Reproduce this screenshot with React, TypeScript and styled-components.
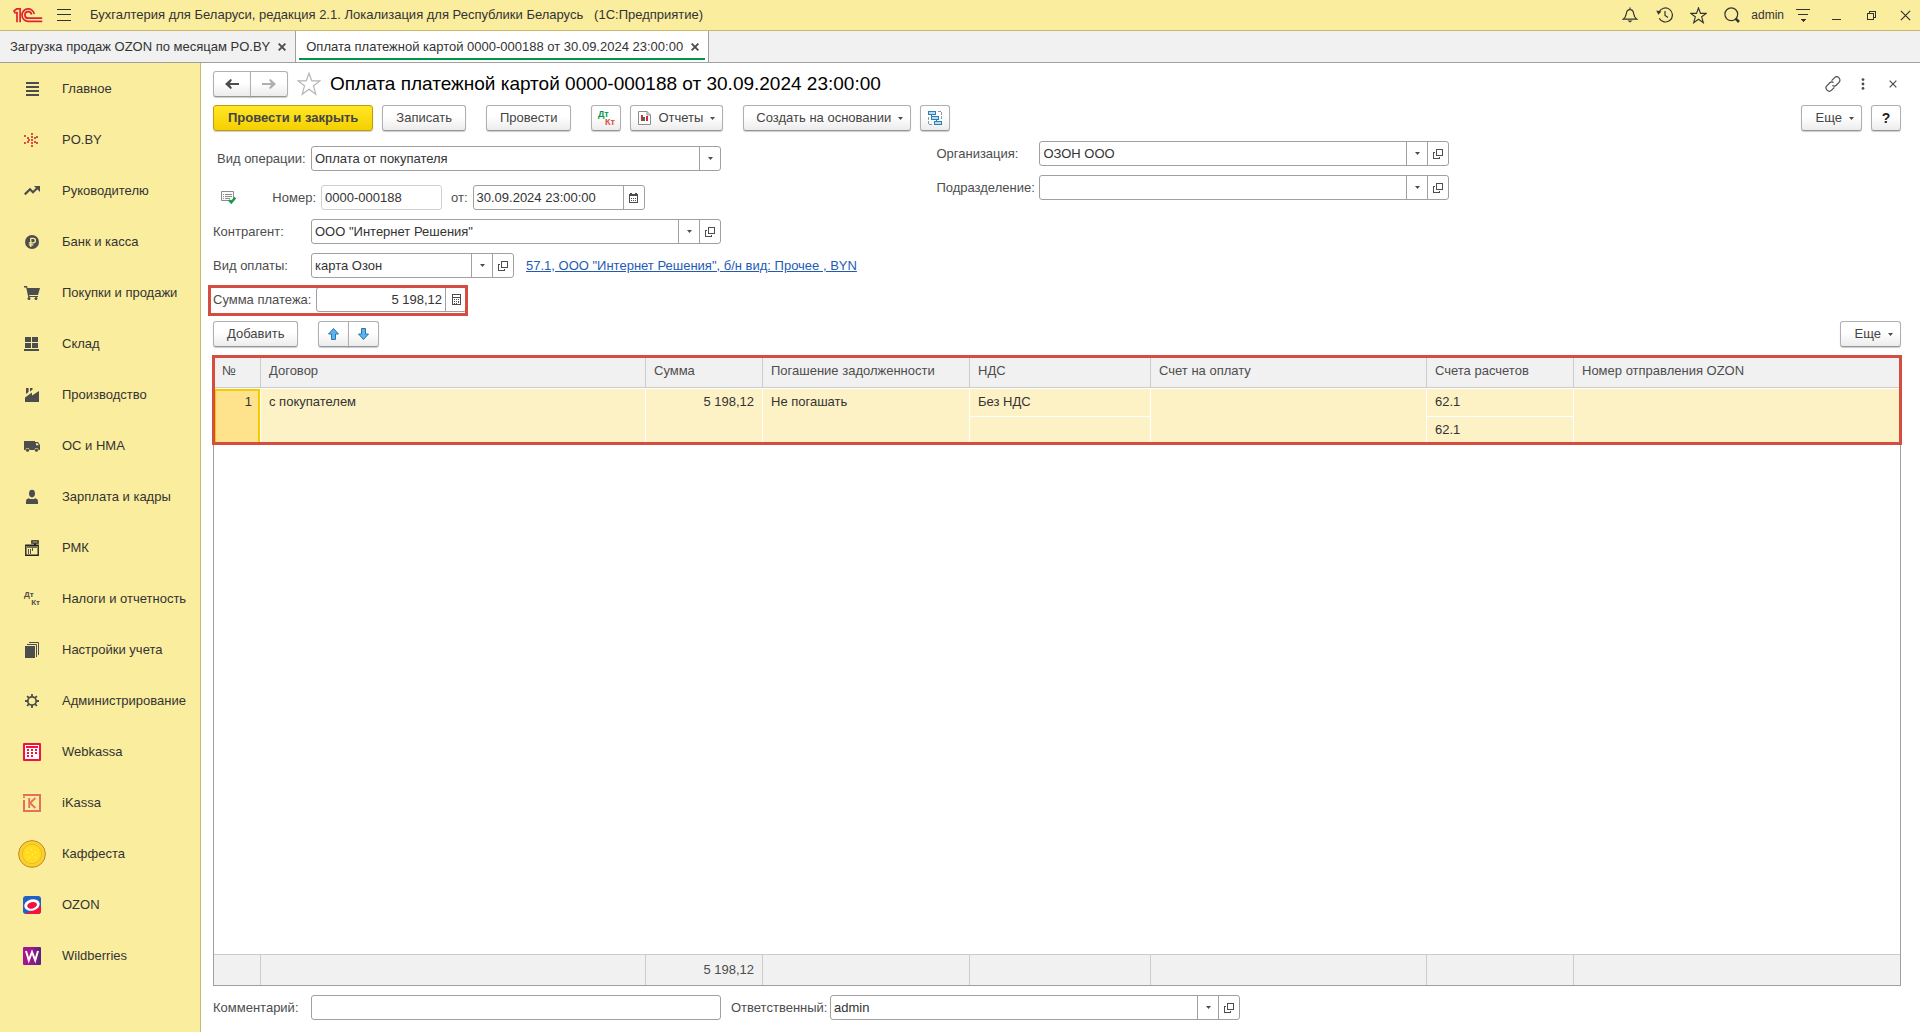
import React from "react";
import styled, { createGlobalStyle, css } from "styled-components";

const ink = "#333333";
const iconInk = "#4d4d4d";
const line = "#a0a0a0";
const cellLine = "#cccccc";
const amber = "#fbed9e";
const amberLine = "#c9b86e";
const mark = "#d54d41";
const font = `"Liberation Sans", Arial, sans-serif`;

const GlobalStyle = createGlobalStyle`
  *, *::before, *::after { box-sizing: border-box; }
  body { margin: 0; background: #ffffff; }
  body, button, input, select, table {
    font-family: ${font};
    font-size: 13px;
    line-height: 16px;
    color: ${ink};
  }
  svg { display: block; flex: none; }
`;

/* ---------- page frame ---------- */

const Page = styled.div`
  display: flex;
  flex-direction: column;
  min-height: 100vh;
`;

const TopBar = styled.header`
  display: flex;
  align-items: center;
  gap: 14px;
  height: 31px;
  padding: 0 5px 0 13px;
  background: ${amber};
  border-bottom: 1px solid ${amberLine};
`;

const AppTitle = styled.div`
  flex: 1;
  padding-left: 5px;
  white-space: pre;
`;

const IconGroup = styled.div<{ $gap?: number }>`
  display: flex;
  align-items: center;
  gap: ${(p) => p.$gap ?? 14}px;
`;

const IconButton = styled.button<{ $size?: number }>`
  display: flex;
  align-items: center;
  justify-content: center;
  width: ${(p) => p.$size ?? 20}px;
  height: 20px;
  padding: 0;
  border: 0;
  background: none;
`;

const UserName = styled.span`
  font-size: 12px;
`;

const TabBar = styled.nav`
  display: flex;
  height: 32px;
  background: #f1f1f1;
  border-bottom: 1px solid ${line};
`;

const Tab = styled.div<{ $active?: boolean }>`
  display: flex;
  align-items: center;
  gap: 2px;
  position: relative;
  padding: 0 3px 0 10px;
  border-right: 1px solid ${line};
  white-space: nowrap;
  ${(p) =>
    p.$active &&
    css`
      background: #ffffff;
      &::after {
        content: "";
        position: absolute;
        left: 3px;
        right: 3px;
        bottom: 2px;
        height: 2px;
        background: #009646;
      }
    `}
`;

const TabLink = styled.a`
  color: ${ink};
  text-decoration: none;
`;

const Body = styled.div`
  display: flex;
  flex: 1;
`;

const Sidebar = styled.nav`
  flex: none;
  width: 201px;
  background: ${amber};
  border-right: 1px solid ${amberLine};
`;

const SideLink = styled.a`
  display: flex;
  align-items: center;
  gap: 16px;
  height: 51px;
  padding-left: 18px;
  color: ${ink};
  text-decoration: none;
  white-space: nowrap;
`;

const SideIcon = styled.span`
  display: flex;
  justify-content: center;
  width: 28px;
  color: ${iconInk};
`;

const SideEntry = styled.span`
  display: grid;
  font-size: 8px;
  line-height: 8px;
  font-weight: bold;
  width: 16px;
`;

const Main = styled.main`
  display: flex;
  flex-direction: column;
  flex: 1;
  min-width: 0;
  padding: 8px 19px 12px 12px;
`;

/* ---------- header and commands ---------- */

const Heading = styled.div`
  display: flex;
  align-items: center;
  height: 25px;
  margin-bottom: 9px;
`;

const Title = styled.h1`
  flex: 1;
  margin: 0;
  font-size: 19px;
  line-height: 24px;
  font-weight: normal;
  color: #000000;
  white-space: nowrap;
`;

const StarSlot = styled.div`
  padding: 0 9px;
`;

const Bar = styled.div`
  display: flex;
  align-items: center;
  gap: 9px;
`;

const Spacer = styled.div<{ $width?: number }>`
  ${(p) => (p.$width ? `width: ${p.$width}px;` : "flex: 1;")}
`;

const Button = styled.button<{ $primary?: boolean; $pad?: number }>`
  display: flex;
  align-items: center;
  justify-content: center;
  gap: 7px;
  height: 26px;
  padding: 0 ${(p) => p.$pad ?? 13}px;
  border: 1px solid #b0b0b0;
  border-bottom-color: #959595;
  border-radius: 3px;
  background: linear-gradient(#ffffff 45%, #ececec);
  box-shadow: 0 1px 1px rgba(0, 0, 0, 0.2);
  color: #444444;
  white-space: nowrap;
  ${(p) =>
    p.$primary &&
    css`
      border-color: #c09a10;
      background: linear-gradient(#ffe727, #f5d000);
      font-weight: bold;
    `}
`;

const DropButton = styled(Button)`
  justify-content: flex-end;
  padding: 0 7px 0 ${(p) => p.$pad ?? 14}px;
`;

const SquareButton = styled(Button)`
  width: 30px;
  padding: 0;
`;

const ButtonPair = styled.div<{ $half: number }>`
  display: flex;
  button {
    width: ${(p) => p.$half}px;
    padding: 0;
  }
  button:first-child {
    border-top-right-radius: 0;
    border-bottom-right-radius: 0;
  }
  button:last-child {
    margin-left: -1px;
    border-top-left-radius: 0;
    border-bottom-left-radius: 0;
  }
`;

const EntryMark = styled.span`
  display: grid;
  width: 17px;
  font-size: 9px;
  line-height: 8px;
  font-weight: bold;
`;

const Debit = styled.span<{ $color?: string }>`
  color: ${(p) => p.$color ?? "inherit"};
  text-align: left;
`;

const Credit = styled(Debit)`
  text-align: right;
`;

const HelpMark = styled.span`
  font-size: 14px;
  font-weight: bold;
  color: #222222;
`;

/* ---------- form ---------- */

const Form = styled.form`
  display: flex;
  flex-direction: column;
  flex: 1;
`;

const Fields = styled.div`
  display: grid;
  grid-template-columns: 3fr 4fr;
  padding: 10px 0 9px;
`;

const Column = styled.div<{ $top?: number }>`
  display: flex;
  flex-direction: column;
  gap: 9px;
  padding-top: ${(p) => p.$top ?? 0}px;
`;

const Row = styled.div<{ $space?: number }>`
  display: flex;
  align-items: center;
  padding-top: ${(p) => p.$space ?? 0}px;
`;

const Label = styled.label<{ $width?: number; $indent?: number }>`
  flex: none;
  ${(p) => p.$width && `width: ${p.$width}px;`}
  padding-left: ${(p) => p.$indent ?? 0}px;
  color: ${iconInk};
  white-space: nowrap;
`;

const NumberLead = styled.div`
  display: flex;
  align-items: center;
  justify-content: space-between;
  width: 108px;
  padding: 0 5px 0 8px;
`;

const DateLabel = styled(Label)`
  padding: 0 5px 0 9px;
`;

const Box = styled.div<{ $width: number; $faint?: boolean }>`
  display: flex;
  width: ${(p) => p.$width}px;
  height: 25px;
  border: 1px solid ${(p) => (p.$faint ? "#d0d0d0" : line)};
  border-radius: 3px;
  background: #ffffff;
  overflow: hidden;
`;

const Input = styled.input<{ $right?: boolean }>`
  flex: 1;
  min-width: 0;
  padding: 0 3px;
  border: 0;
  outline: 0;
  background: none;
  text-align: ${(p) => (p.$right ? "right" : "left")};
`;

const BoxButton = styled.button`
  display: flex;
  align-items: center;
  justify-content: center;
  width: 21px;
  padding: 0;
  border: 0;
  border-left: 1px solid ${line};
  background: none;
`;

const SelectBox = styled.div`
  display: grid;
  flex: 1;
  grid-template-columns: 1fr 21px;
`;

const Select = styled.select`
  grid-area: 1 / 1 / 2 / 3;
  appearance: none;
  padding: 0 3px;
  border: 0;
  outline: 0;
  background: none;
`;

const SelectArrow = styled.span`
  grid-area: 1 / 2;
  display: flex;
  align-items: center;
  justify-content: center;
  border-left: 1px solid ${line};
  pointer-events: none;
`;

const AccountLink = styled.a`
  margin-left: 12px;
  color: #1f5bb5;
  text-decoration: underline;
  white-space: nowrap;
`;

const Marked = styled.div`
  position: relative;
  align-self: flex-start;
  &::after {
    content: "";
    position: absolute;
    inset: -2px -1px -4px -5px;
    border: 3px solid ${mark};
    pointer-events: none;
  }
`;

/* ---------- table ---------- */

const Frame = styled.div`
  position: relative;
  display: grid;
  flex: 1;
  margin: 9px 0;
  border: 1px solid ${line};
  &::after {
    content: "";
    position: absolute;
    top: -2px;
    left: -2px;
    right: -2px;
    height: 90px;
    border: 3px solid ${mark};
    pointer-events: none;
  }
`;

const Grid = styled.table`
  width: 100%;
  height: 100%;
  table-layout: fixed;
  border-collapse: separate;
  border-spacing: 0;
`;

const HeadCell = styled.th`
  height: 31px;
  padding: 0 8px 2px;
  background: #f1f1f1;
  border-right: 1px solid ${cellLine};
  border-bottom: 1px solid ${cellLine};
  color: ${iconInk};
  font-weight: normal;
  text-align: left;
  white-space: nowrap;
  &:last-child { border-right: 0; }
`;

const Cell = styled.td<{ $right?: boolean; $current?: boolean }>`
  height: 57px;
  padding: 0;
  vertical-align: top;
  background: #fdf1c6;
  border-top: 1px solid #ffffff;
  border-right: 1px solid #ffffff;
  text-align: ${(p) => (p.$right ? "right" : "left")};
  &:last-child { border-right: 0; }
  ${(p) =>
    p.$current &&
    css`
      background: #ffe38c;
      box-shadow: inset 0 0 0 2px #f5cb00;
    `}
`;

const CellLine = styled.div<{ $ruled?: boolean }>`
  height: 28px;
  padding: 5px 8px 0;
  white-space: nowrap;
  ${(p) => p.$ruled && "border-bottom: 1px solid #ffffff;"}
`;

const FillerRow = styled.tr`
  height: 100%;
`;

const FootCell = styled.td`
  height: 31px;
  padding: 0 8px;
  background: #f1f1f1;
  border-top: 1px solid ${cellLine};
  border-right: 1px solid ${cellLine};
  color: ${iconInk};
  text-align: right;
  &:last-child { border-right: 0; }
`;

/* ---------- icons ---------- */

const Arrow = () => (
  <svg width="5" height="3" viewBox="0 0 5 3">
    <path d="M0 0H5L2.5 3Z" fill={iconInk} />
  </svg>
);

const OpenIcon = () => (
  <svg width="10" height="10" viewBox="0 0 10 10" fill="none" stroke={iconInk} shapeRendering="crispEdges">
    <path d="M3.5 0.5H9.5V6.5H3.5ZM2 3.5H0.5V9.5H6.5V8" />
  </svg>
);

const CalendarIcon = () => (
  <svg width="9" height="10" viewBox="0 0 9 10" shapeRendering="crispEdges">
    <path d="M0 1H9V3H0ZM1 0H3V1H1ZM6 0H8V1H6Z" fill={iconInk} />
    <path d="M0.5 3V9.5H8.5V3" fill="none" stroke={iconInk} />
    <path d="M2 5H3V6H2ZM4 5H5V6H4ZM6 5H7V6H6ZM2 7H3V8H2ZM4 7H5V8H4ZM6 7H7V8H6Z" fill={iconInk} />
  </svg>
);

const CalculatorIcon = () => (
  <svg width="9" height="11" viewBox="0 0 9 11" shapeRendering="crispEdges">
    <path d="M0.5 0.5H8.5V10.5H0.5ZM0 3.5H9" fill="none" stroke={iconInk} />
    <path d="M2 5H3V6H2ZM4 5H5V6H4ZM6 5H7V6H6ZM2 7H3V8H2ZM4 7H5V8H4ZM6 7H7V9H6ZM2 9H3V10H2ZM4 9H5V10H4Z" fill={iconInk} />
  </svg>
);

const Logo = () => (
  <svg width="30" height="15" viewBox="0 0 30 15" fill="none" stroke="#e2232e" strokeWidth="1.7">
    <path d="M0.4 3.6L3.6 0.9H7.1V14.2M4 14.2V4.6H1" />
    <path d="M21.3 6A6.2 6.2 0 1 0 15.2 13.3H29.2M18.5 6.6A3.3 3.3 0 1 0 15.4 10.2H29.2" />
  </svg>
);

const MenuIcon = () => (
  <svg width="14" height="12" viewBox="0 0 14 12" stroke={ink} shapeRendering="crispEdges">
    <path d="M0 0.5H14M0 5.5H14M0 11.5H14" />
  </svg>
);

const BellIcon = () => (
  <svg width="16" height="16" viewBox="0 0 16 16" fill="none" stroke={ink} strokeWidth="1.2">
    <path d="M8 0.6V2.4M1.2 12.2C3.6 10.6 4 9 4.4 6.4C4.7 4 6 2.6 8 2.6C10 2.6 11.3 4 11.6 6.4C12 9 12.4 10.6 14.8 12.2Z" />
    <path d="M5.4 13.6H10.6L8 15.6Z" fill={ink} stroke="none" />
  </svg>
);

const HistoryIcon = () => (
  <svg width="17" height="16" viewBox="0 0 17 16" fill="none" stroke={ink} strokeWidth="1.2">
    <path d="M3 5.2A7 7 0 1 1 3.2 11.2M9 4V8.4L12 10.6" />
    <path d="M0.3 3.6L5.4 4.4L2.3 7.8Z" fill={ink} stroke="none" />
  </svg>
);

const StarIcon = ({ size, color }: { size: number; color: string }) => (
  <svg width={size} height={size} viewBox="0 0 22 22" fill="none" stroke={color} strokeWidth={size > 18 ? 1.1 : 1.5}>
    <path d="M11 1.2L13.6 8.2H21L15.1 12.7L17.2 20.3L11 15.8L4.8 20.3L6.9 12.7L1 8.2H8.4Z" />
  </svg>
);

const SearchIcon = () => (
  <svg width="16" height="16" viewBox="0 0 16 16" fill="none" stroke={ink}>
    <circle cx="7.3" cy="7.3" r="6.4" strokeWidth="1.2" />
    <path d="M11.4 11.4L15 15" strokeWidth="2.6" />
  </svg>
);

const PanelIcon = () => (
  <svg width="14" height="14" viewBox="0 0 14 14" shapeRendering="crispEdges">
    <path d="M0 1.5H14M2 6.5H12" stroke={ink} />
    <path d="M4 11H10L7 14Z" fill={ink} />
  </svg>
);

const MinimizeIcon = () => (
  <svg width="10" height="9" viewBox="0 0 10 9" shapeRendering="crispEdges">
    <path d="M0 8.5H9" stroke={ink} />
  </svg>
);

const RestoreIcon = () => (
  <svg width="9" height="9" viewBox="0 0 9 9" fill="none" stroke={ink} shapeRendering="crispEdges">
    <path d="M0.5 2.5H6.5V8.5H0.5ZM2.5 2.5V0.5H8.5V6.5H6.5" />
  </svg>
);

const CrossIcon = ({ size, width, color = ink }: { size: number; width: number; color?: string }) => (
  <svg width={size} height={size} viewBox="0 0 10 10" stroke={color} strokeWidth={width}>
    <path d="M0.8 0.8L9.2 9.2M9.2 0.8L0.8 9.2" />
  </svg>
);

const BackIcon = ({ color, flip }: { color: string; flip?: boolean }) => (
  <svg width="14" height="10" viewBox="0 0 14 10">
    <path
      d={flip ? "M0 4H9L7 1L8.5 0L14 5L8.5 10L7 9L9 6H0Z" : "M14 4H5L7 1L5.5 0L0 5L5.5 10L7 9L5 6H14Z"}
      fill={color}
    />
  </svg>
);

const LinkIcon = () => (
  <svg width="16" height="16" viewBox="0 0 16 16" fill="none" stroke={iconInk} strokeWidth="1.2">
    <path d="M6.6 4.6L9.4 1.9A3.1 3.1 0 0 1 14 6.4L11.2 9.2A3.1 3.1 0 0 1 7.4 9.5M9.4 11.4L6.6 14.1A3.1 3.1 0 0 1 2 9.6L4.8 6.8A3.1 3.1 0 0 1 8.6 6.5" />
  </svg>
);

const DotsIcon = () => (
  <svg width="4" height="12" viewBox="0 0 4 12" fill={iconInk}>
    <circle cx="2" cy="1.6" r="1.4" />
    <circle cx="2" cy="6" r="1.4" />
    <circle cx="2" cy="10.4" r="1.4" />
  </svg>
);

const ReportIcon = () => (
  <svg width="13" height="14" viewBox="0 0 13 14">
    <path d="M0.5 0.5H9L12.5 4V13.5H0.5Z" fill="#ffffff" stroke="#8c8c8c" />
    <path d="M9 0.5V4H12.5" fill="none" stroke="#8c8c8c" />
    <path d="M3 4H5V10H3Z" fill="#e01f3d" />
    <path d="M5 6H7V10H5Z" fill="#009646" />
    <path d="M8 5H10V10H8Z" fill="#e01f3d" />
  </svg>
);

const StructureIcon = () => (
  <svg width="15" height="15" viewBox="0 0 15 15" fill="none" shapeRendering="crispEdges">
    <path d="M10 0.5H13.5V9M4 13.5H0.5V6" stroke="#8a9aa5" strokeDasharray="3 1" />
    <path d="M3.5 4V6.5M8.5 9V11" stroke="#2d7fb8" />
    <path d="M0.5 0.5H7.5V3.5H0.5ZM3.5 5.5H10.5V8.5H3.5ZM6.5 10.5H13.5V13.5H6.5Z" fill="#b9dcf2" stroke="#2d7fb8" />
  </svg>
);

const PostedIcon = () => (
  <svg width="15" height="13" viewBox="0 0 15 13" fill="none">
    <path d="M0.5 0.5H12.5V9.5H0.5Z" stroke="#8c8c8c" fill="#fafafa" />
    <path d="M2 3.5H3M4 3.5H11M2 5.5H3M4 5.5H11M2 7.5H3M4 7.5H9" stroke="#8c8c8c" />
    <path d="M8 9L10.3 11.4L14.3 6.6" stroke="#1b9a4b" strokeWidth="2.4" />
  </svg>
);

const MoveIcon = ({ down }: { down?: boolean }) => (
  <svg width="11" height="12" viewBox="0 0 11 12">
    <path
      d={down ? "M3.5 0.5H7.5V6H10.5L5.5 11.5L0.5 6H3.5Z" : "M3.5 11.5H7.5V6H10.5L5.5 0.5L0.5 6H3.5Z"}
      fill="#5db3ee"
      stroke="#2b77ad"
      strokeLinejoin="round"
    />
  </svg>
);

const Glyph = ({ children, size = 16 }: { children: React.ReactNode; size?: number }) => (
  <svg width={size} height={size} viewBox={`0 0 ${size} ${size}`} fill="currentColor">
    {children}
  </svg>
);

/* ---------- data ---------- */

const sections: { name: string; icon: React.ReactNode }[] = [
  {
    name: "Главное",
    icon: <Glyph><path d="M2 1H15V3H2ZM2 5H15V7H2ZM2 9H15V11H2ZM2 13H15V15H2Z" /></Glyph>,
  },
  {
    name: "PO.BY",
    icon: (
      <Glyph>
        <path
          fill="#d9503f"
          d="M7 1H9V3H7ZM7 4H9V6H7ZM7 7H9V9H7ZM7 10H9V12H7ZM7 13H9V15H7ZM0 3H2V5H0ZM3 5H5V7H3ZM3 9H5V11H3ZM0 10H2V12H0ZM12 4H14V6H12ZM10 5H12V7H10ZM10 9H12V11H10ZM12 10H14V12H12ZM4 7H6V9H4Z"
        />
      </Glyph>
    ),
  },
  {
    name: "Руководителю",
    icon: (
      <Glyph>
        <path d="M0.8 11.4L6 6.2L9 9.2L13.6 4.8" fill="none" stroke="currentColor" strokeWidth="2.2" />
        <path d="M10 3H16V9Z" />
      </Glyph>
    ),
  },
  {
    name: "Банк и касса",
    icon: (
      <Glyph>
        <circle cx="8" cy="8" r="7" />
        <path d="M6.8 13V4.4H9.2A2.2 2.2 0 0 1 9.2 8.8H4.8M4.8 10.8H9.4" fill="none" stroke={amber} strokeWidth="1.3" />
      </Glyph>
    ),
  },
  {
    name: "Покупки и продажи",
    icon: (
      <Glyph>
        <path d="M0 1H3L3.6 3H16L14 10H5.2L5.4 11H14V12H4.2L2.2 2.4H0Z" />
        <circle cx="5" cy="13.6" r="1.5" />
        <circle cx="12" cy="13.6" r="1.5" />
      </Glyph>
    ),
  },
  {
    name: "Склад",
    icon: <Glyph><path d="M1 1H7V6H1ZM8 1H14V6H8ZM1 7H7V12H1ZM8 7H14V12H8ZM0 13H15V15H0Z" /></Glyph>,
  },
  {
    name: "Производство",
    icon: <Glyph><path d="M1 15V10.5L8 5.5V8.6L15 4V15ZM2 1H4.6V5L2 7ZM6 1H8.6L8.4 2.8L6 4.4Z" /></Glyph>,
  },
  {
    name: "ОС и НМА",
    icon: (
      <Glyph>
        <path d="M0 3H11V12H0ZM11 4H14L16 7V12H11Z" />
        <path d="M12 5.2H13.6L14.8 7.2H12Z" fill={amber} />
        <circle cx="3.5" cy="12" r="2" fill={amber} />
        <circle cx="12.5" cy="12" r="2" fill={amber} />
        <circle cx="3.5" cy="12.2" r="1.6" />
        <circle cx="12.5" cy="12.2" r="1.6" />
      </Glyph>
    ),
  },
  {
    name: "Зарплата и кадры",
    icon: (
      <Glyph>
        <ellipse cx="8" cy="4.6" rx="3" ry="3.8" />
        <path d="M2 15V12Q2 9.6 4.6 9.2Q8 11 11.4 9.2Q14 9.6 14 12V15Z" />
      </Glyph>
    ),
  },
  {
    name: "РМК",
    icon: (
      <Glyph>
        <path d="M1.8 5.2H14.2V15.2H1.8Z" fill="none" stroke="#222222" strokeWidth="1.4" />
        <path d="M7.8 0.8H14.2V3.2H7.8Z" fill="#d9cd92" stroke="#222222" strokeWidth="1.2" />
        <path d="M10 3.4H12V6H10Z" fill="#222222" />
        <path d="M3 6H13V8H3Z" fill="#77725a" />
        <path d="M4 9H5V14H4ZM6 9H7V14H6ZM8 8H9V11H8Z" fill="#555555" />
      </Glyph>
    ),
  },
  {
    name: "Налоги и отчетность",
    icon: (
      <SideEntry>
        <Debit>Дт</Debit>
        <Credit>Кт</Credit>
      </SideEntry>
    ),
  },
  {
    name: "Настройки учета",
    icon: (
      <Glyph>
        <path d="M1 4H11V16H1Z" />
        <path d="M3 2.5H12.5V15M5 0.5H14.5V13" fill="none" stroke="currentColor" />
      </Glyph>
    ),
  },
  {
    name: "Администрирование",
    icon: (
      <Glyph>
        <circle cx="8" cy="8" r="4.2" fill="none" stroke="currentColor" strokeWidth="1.8" />
        <path
          d="M8 1V4M8 12V15M1 8H4M12 8H15M3.1 3.1L5.2 5.2M10.8 10.8L12.9 12.9M3.1 12.9L5.2 10.8M10.8 5.2L12.9 3.1"
          stroke="currentColor"
          strokeWidth="1.8"
        />
      </Glyph>
    ),
  },
  {
    name: "Webkassa",
    icon: (
      <Glyph size={18}>
        <rect width="18" height="18" rx="1" fill="#f4103f" />
        <path d="M2 2H16V16H2Z" fill="#ffffff" />
        <path
          d="M3 3H15V5H3ZM4 6H6V8H4ZM8 6H10V8H8ZM12 6H14V8H12ZM4 9H6V11H4ZM8 9H10V11H8ZM12 9H14V11H12ZM4 12H6V14H4ZM8 12H10V14H8Z"
          fill="#f4103f"
        />
      </Glyph>
    ),
  },
  {
    name: "iKassa",
    icon: (
      <Glyph size={18}>
        <path d="M0 1H17V17H1V6M1 4V2.6" fill="none" stroke="#e27060" strokeWidth="2" />
        <path d="M6.2 4V14M12.4 4L7 9L12.4 14" fill="none" stroke="#e27060" strokeWidth="1.8" />
      </Glyph>
    ),
  },
  {
    name: "Каффеста",
    icon: (
      <Glyph size={28}>
        <circle cx="14" cy="14" r="13.4" fill="#fbd02c" stroke="#bd8a24" />
        <circle cx="14" cy="14" r="9.6" fill="#ffdc1e" stroke="#f0b92a" />
        <path d="M9 12H10V13H9ZM13 9H14V10H13ZM17 12H18V13H17ZM14 14H15V15H14ZM11 17H12V18H11ZM17 17H18V18H17Z" fill="#fff2a0" />
      </Glyph>
    ),
  },
  {
    name: "OZON",
    icon: (
      <Glyph size={18}>
        <rect width="18" height="18" rx="3" fill="#2160c4" />
        <path d="M2 18L18 10V15Q18 18 15 18Z" fill="#f4103f" />
        <ellipse cx="9" cy="9" rx="7.8" ry="5.6" transform="rotate(-15 9 9)" fill="#ffffff" />
        <ellipse cx="9" cy="9.3" rx="5" ry="3.2" transform="rotate(-15 9 9)" fill="#f4103f" />
      </Glyph>
    ),
  },
  {
    name: "Wildberries",
    icon: (
      <Glyph size={18}>
        <defs>
          <linearGradient id="berry">
            <stop offset="0.4" stopColor="#a4148f" />
            <stop offset="1" stopColor="#55257a" />
          </linearGradient>
        </defs>
        <rect width="18" height="18" rx="1" fill="url(#berry)" />
        <path d="M3 4L5.8 13.4L9 5L12.2 13.4L15 4" fill="none" stroke="#ffffff" strokeWidth="2" />
      </Glyph>
    ),
  },
];

const columns: { title: string; width?: number }[] = [
  { title: "№", width: 47 },
  { title: "Договор", width: 385 },
  { title: "Сумма", width: 117 },
  { title: "Погашение задолженности", width: 207 },
  { title: "НДС", width: 181 },
  { title: "Счет на оплату", width: 276 },
  { title: "Счета расчетов", width: 147 },
  { title: "Номер отправления OZON" },
];

const RefField = ({ id, value, width }: { id: string; value: string; width: number }) => (
  <Box $width={width}>
    <Input id={id} defaultValue={value} />
    <BoxButton type="button" aria-label="Выбрать из списка"><Arrow /></BoxButton>
    <BoxButton type="button" aria-label="Открыть"><OpenIcon /></BoxButton>
  </Box>
);

export default function App() {
  return (
    <Page>
      <GlobalStyle />
      <TopBar>
        <Logo />
        <MenuIcon />
        <AppTitle>{"Бухгалтерия для Беларуси, редакция 2.1. Локализация для Республики Беларусь   (1С:Предприятие)"}</AppTitle>
        <IconGroup $gap={9}>
          <IconGroup>
            <IconButton aria-label="Уведомления"><BellIcon /></IconButton>
            <IconButton aria-label="История"><HistoryIcon /></IconButton>
            <IconButton aria-label="Избранное"><StarIcon size={17} color={ink} /></IconButton>
            <IconButton aria-label="Поиск"><SearchIcon /></IconButton>
          </IconGroup>
          <UserName>admin</UserName>
          <IconGroup>
            <IconButton aria-label="Настройка"><PanelIcon /></IconButton>
            <IconButton aria-label="Свернуть"><MinimizeIcon /></IconButton>
            <IconButton aria-label="Восстановить"><RestoreIcon /></IconButton>
            <IconButton aria-label="Закрыть приложение"><CrossIcon size={11} width={1.1} /></IconButton>
          </IconGroup>
        </IconGroup>
      </TopBar>

      <TabBar>
        <Tab>
          <TabLink href="#sales">Загрузка продаж OZON по месяцам PO.BY</TabLink>
          <IconButton aria-label="Закрыть вкладку"><CrossIcon size={8} width={2.4} color={iconInk} /></IconButton>
        </Tab>
        <Tab $active>
          <TabLink href="#payment">Оплата платежной картой 0000-000188 от 30.09.2024 23:00:00</TabLink>
          <IconButton aria-label="Закрыть вкладку"><CrossIcon size={8} width={2.4} color={iconInk} /></IconButton>
        </Tab>
      </TabBar>

      <Body>
        <Sidebar>
          {sections.map((s) => (
            <SideLink key={s.name} href="#section">
              <SideIcon>{s.icon}</SideIcon>
              {s.name}
            </SideLink>
          ))}
        </Sidebar>

        <Main>
          <Heading>
            <ButtonPair $half={38}>
              <Button aria-label="Назад"><BackIcon color={iconInk} /></Button>
              <Button aria-label="Вперед"><BackIcon color="#b0b0b0" flip /></Button>
            </ButtonPair>
            <StarSlot><StarIcon size={24} color="#b4b4b4" /></StarSlot>
            <Title>Оплата платежной картой 0000-000188 от 30.09.2024 23:00:00</Title>
            <IconGroup>
              <IconButton $size={16} aria-label="Ссылка"><LinkIcon /></IconButton>
              <IconButton $size={16} aria-label="Действия"><DotsIcon /></IconButton>
              <IconButton $size={16} aria-label="Закрыть"><CrossIcon size={8} width={1.5} color={iconInk} /></IconButton>
            </IconGroup>
          </Heading>

          <Bar>
            <Button $primary $pad={14}>Провести и закрыть</Button>
            <Button>Записать</Button>
            <Spacer $width={2} />
            <Button>Провести</Button>
            <Spacer $width={2} />
            <SquareButton aria-label="Проводки">
              <EntryMark>
                <Debit $color="#009646">Дт</Debit>
                <Credit $color="#d9503f">Кт</Credit>
              </EntryMark>
            </SquareButton>
            <DropButton $pad={7}><ReportIcon />Отчеты<Arrow /></DropButton>
            <Spacer $width={2} />
            <DropButton $pad={12}>Создать на основании<Arrow /></DropButton>
            <SquareButton aria-label="Структура подчиненности"><StructureIcon /></SquareButton>
            <Spacer />
            <DropButton>Еще<Arrow /></DropButton>
            <SquareButton aria-label="Справка"><HelpMark>?</HelpMark></SquareButton>
          </Bar>

          <Form>
            <Fields>
              <Column $top={5}>
                <Row>
                  <Label htmlFor="operation" $width={98} $indent={4}>Вид операции:</Label>
                  <Box $width={410}>
                    <SelectBox>
                      <Select id="operation" defaultValue="buyer">
                        <option value="buyer">Оплата от покупателя</option>
                      </Select>
                      <SelectArrow><Arrow /></SelectArrow>
                    </SelectBox>
                  </Box>
                </Row>
                <Row $space={5}>
                  <NumberLead>
                    <PostedIcon />
                    <Label htmlFor="number">Номер:</Label>
                  </NumberLead>
                  <Box $width={121} $faint><Input id="number" defaultValue="0000-000188" /></Box>
                  <DateLabel htmlFor="date">от:</DateLabel>
                  <Box $width={172}>
                    <Input id="date" defaultValue="30.09.2024 23:00:00" />
                    <BoxButton type="button" aria-label="Календарь"><CalendarIcon /></BoxButton>
                  </Box>
                </Row>
                <Row>
                  <Label htmlFor="partner" $width={98}>Контрагент:</Label>
                  <RefField id="partner" value={'ООО "Интернет Решения"'} width={410} />
                </Row>
                <Row>
                  <Label htmlFor="payment" $width={98}>Вид оплаты:</Label>
                  <RefField id="payment" value="карта Озон" width={203} />
                  <AccountLink href="#account">57.1, ООО "Интернет Решения", б/н вид: Прочее , BYN</AccountLink>
                </Row>
                <Marked>
                  <Row>
                    <Label htmlFor="amount" $width={103}>Сумма платежа:</Label>
                    <Box $width={151}>
                      <Input id="amount" $right defaultValue="5 198,12" />
                      <BoxButton type="button" aria-label="Калькулятор"><CalculatorIcon /></BoxButton>
                    </Box>
                  </Row>
                </Marked>
              </Column>
              <Column>
                <Row>
                  <Label htmlFor="company" $width={103}>Организация:</Label>
                  <RefField id="company" value="ОЗОН ООО" width={410} />
                </Row>
                <Row>
                  <Label htmlFor="division" $width={103}>Подразделение:</Label>
                  <RefField id="division" value="" width={410} />
                </Row>
              </Column>
            </Fields>

            <Bar>
              <Button type="button">Добавить</Button>
              <Spacer $width={2} />
              <ButtonPair $half={31}>
                <Button type="button" aria-label="Вверх"><MoveIcon /></Button>
                <Button type="button" aria-label="Вниз"><MoveIcon down /></Button>
              </ButtonPair>
              <Spacer />
              <DropButton type="button">Еще<Arrow /></DropButton>
            </Bar>

            <Frame>
              <Grid>
                <colgroup>
                  {columns.map((c) => <col key={c.title} width={c.width} />)}
                </colgroup>
                <thead>
                  <tr>{columns.map((c) => <HeadCell key={c.title} scope="col">{c.title}</HeadCell>)}</tr>
                </thead>
                <tbody>
                  <tr>
                    <Cell $right $current><CellLine>1</CellLine></Cell>
                    <Cell><CellLine>с покупателем</CellLine></Cell>
                    <Cell $right><CellLine>5 198,12</CellLine></Cell>
                    <Cell><CellLine>Не погашать</CellLine></Cell>
                    <Cell><CellLine $ruled>Без НДС</CellLine></Cell>
                    <Cell />
                    <Cell>
                      <CellLine $ruled>62.1</CellLine>
                      <CellLine>62.1</CellLine>
                    </Cell>
                    <Cell />
                  </tr>
                  <FillerRow><td colSpan={columns.length} /></FillerRow>
                </tbody>
                <tfoot>
                  <tr>
                    {columns.map((c) => (
                      <FootCell key={c.title}>{c.title === "Сумма" ? "5 198,12" : ""}</FootCell>
                    ))}
                  </tr>
                </tfoot>
              </Grid>
            </Frame>

            <Row>
              <Label htmlFor="comment" $width={98}>Комментарий:</Label>
              <Box $width={410}><Input id="comment" /></Box>
              <Spacer $width={10} />
              <Label htmlFor="owner" $width={99}>Ответственный:</Label>
              <RefField id="owner" value="admin" width={410} />
            </Row>
          </Form>
        </Main>
      </Body>
    </Page>
  );
}
